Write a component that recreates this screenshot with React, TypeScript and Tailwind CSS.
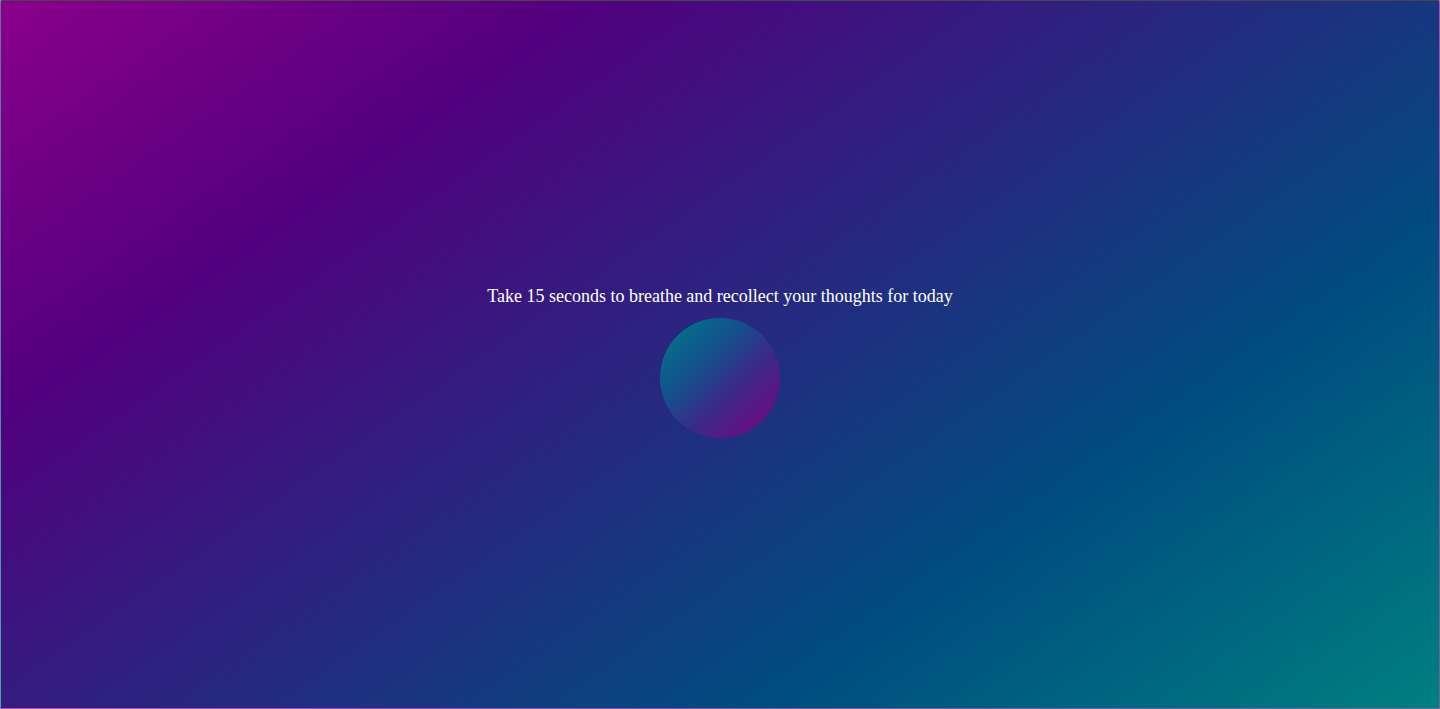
export default function App() {
  return (
    <div className="h-[709px] w-full border border-white/30 border-t-[#474747] bg-[linear-gradient(145deg,#8b008b_0%,#52007f_24%,#004c80_72%,#008080_100%)] font-['Liberation_Serif','Times_New_Roman',serif] text-white">
      <div className="flex h-full flex-col items-center pt-[284px]">
        <p className="text-[18px] leading-[22px]">Take 15 seconds to breathe and recollect your thoughts for today</p>
        <div className="mt-[11px] h-[120px] w-[120px] rounded-full bg-[linear-gradient(135deg,#007d86,#12528c_35%,#3a2a88_60%,#80007f)]" />
      </div>
    </div>
  );
}
